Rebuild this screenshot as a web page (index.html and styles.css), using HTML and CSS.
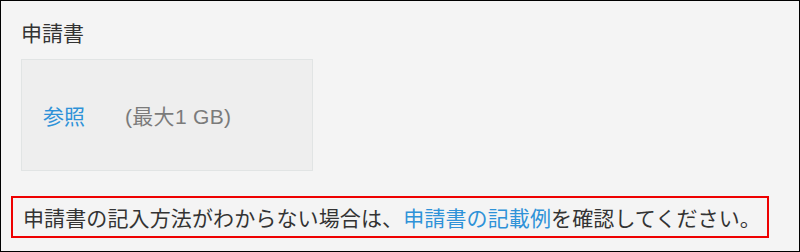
FILE: index.html
```html
<!DOCTYPE html>
<html lang="ja">
<head>
<meta charset="utf-8">
<link rel="stylesheet" href="styles.css">
</head>
<body>
<div class="frame">
  <div class="field-label">申請書</div>
  <div class="upload">
    <a class="browse">参照</a>
    <span class="limit">(最大1 GB)</span>
  </div>
  <div class="notice">申請書の記入方法がわからない場合は、<a class="link">申請書の記載例</a>を確認してください。</div>
</div>
</body>
</html>
```
FILE: styles.css
```css
html, body {
  margin: 0;
  padding: 0;
  background: #ffffff;
}
body {
  font-family: "Noto Sans CJK JP", "Noto Sans", sans-serif;
  color: #333333;
}
.frame {
  box-sizing: border-box;
  width: 800px;
  height: 252px;
  border: 1px solid #000000;
  background: #f4f4f4;
  padding: 16px 0 0 20px;
  overflow: hidden;
}
.field-label {
  font-size: 21px;
  line-height: 30px;
  color: #333333;
}
.upload {
  box-sizing: border-box;
  margin-top: 12px;
  width: 292px;
  height: 112px;
  border: 1px solid #e1e4e4;
  background: #eeeeee;
  display: flex;
  align-items: center;
  padding-left: 21px;
  gap: 40px;
  font-size: 21px;
}
.browse {
  color: #2e92d8;
}
.limit {
  font-family: "Liberation Sans", "Noto Sans CJK JP", sans-serif;
  color: #7b7b7b;
  letter-spacing: 0.3px;
}
.notice {
  box-sizing: border-box;
  margin-top: 25px;
  margin-left: -10px;
  width: 758px;
  height: 42px;
  border: 2px solid #ee0000;
  padding-left: 10px;
  display: flex;
  align-items: center;
  font-size: 21px;
  letter-spacing: 0.12px;
  white-space: nowrap;
  color: #333333;
}
.link {
  color: #2e92d8;
}
```
